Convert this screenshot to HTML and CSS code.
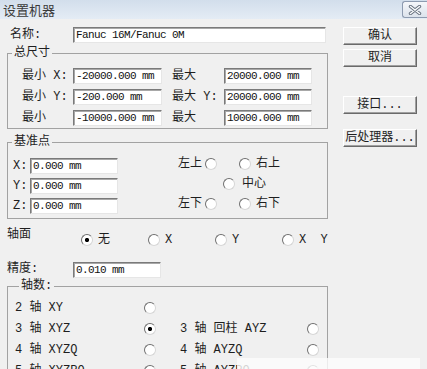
FILE: index.html
```
<!DOCTYPE html>
<html lang="zh-CN">
<head>
  <meta charset="UTF-8">
  <title>设置机器</title>
  <link rel="stylesheet" href="styles.css">
</head>
<body>
  <div class="titlebar">
    <span class="title">设置机器</span>
    <div class="close">
      <svg width="14" height="10" viewBox="0 0 14 10">
        <path d="M2.5 1.5L11.5 8.5M11.5 1.5L2.5 8.5" stroke="#66717f" stroke-width="3.4" stroke-linecap="round"/>
        <path d="M2.5 1.5L11.5 8.5M11.5 1.5L2.5 8.5" stroke="#fbfcfd" stroke-width="1.5" stroke-linecap="round"/>
      </svg>
    </div>
  </div>

  <div class="dialog">
    <div class="main">
      <div class="name-row">
        <label>名称:</label>
        <input class="field name" type="text" value="Fanuc 16M/Fanuc 0M">
      </div>

      <fieldset class="group size">
        <legend>总尺寸</legend>
        <div class="size-grid">
          <label class="lbl">最小 X:</label><input class="field" type="text" value="-20000.000 mm">
          <label class="lbl2">最大</label><input class="field" type="text" value="20000.000 mm">
          <label class="lbl">最小 Y:</label><input class="field" type="text" value="-200.000 mm">
          <label class="lbl2">最大 Y:</label><input class="field" type="text" value="20000.000 mm">
          <label class="lbl">最小</label><input class="field" type="text" value="-10000.000 mm">
          <label class="lbl2">最大</label><input class="field" type="text" value="10000.000 mm">
        </div>
      </fieldset>

      <fieldset class="group base">
        <legend>基准点</legend>
        <div class="base-body">
          <div class="xyz">
            <label>X:</label><input class="field" type="text" value="0.000 mm">
            <label>Y:</label><input class="field" type="text" value="0.000 mm">
            <label>Z:</label><input class="field" type="text" value="0.000 mm">
          </div>
          <div class="corners">
            <div class="corner-row">
              <span class="corner-l">左上</span><input class="radio" type="radio" name="corner">
              <input class="radio right" type="radio" name="corner"><span class="corner-r">右上</span>
            </div>
            <div class="corner-row center">
              <input class="radio" type="radio" name="corner"><span class="corner-c">中心</span>
            </div>
            <div class="corner-row">
              <span class="corner-l">左下</span><input class="radio" type="radio" name="corner">
              <input class="radio right" type="radio" name="corner"><span class="corner-r">右下</span>
            </div>
          </div>
        </div>
      </fieldset>

      <div class="plane">
        <span class="plane-l">轴面</span>
        <div class="plane-opts">
          <label class="opt"><input class="radio" type="radio" name="plane" checked>无</label>
          <label class="opt"><input class="radio" type="radio" name="plane">X</label>
          <label class="opt"><input class="radio" type="radio" name="plane">Y</label>
          <label class="opt"><input class="radio" type="radio" name="plane">X&nbsp; Y</label>
        </div>
      </div>

      <div class="prec-row">
        <label>精度:</label>
        <input class="field" type="text" value="0.010 mm">
      </div>

      <fieldset class="group axes">
        <legend>轴数:</legend>
        <div class="axes-grid">
          <span>2 轴 XY</span><input class="radio" type="radio" name="axes"><span></span><span></span>
          <span>3 轴 XYZ</span><input class="radio" type="radio" name="axes" checked><span class="col3">3 轴 回柱 AYZ</span><input class="radio" type="radio" name="axes">
          <span>4 轴 XYZQ</span><input class="radio" type="radio" name="axes"><span class="col3">4 轴 AYZQ</span><input class="radio" type="radio" name="axes">
          <span>5 轴 XYZRQ</span><input class="radio" type="radio" name="axes"><span class="col3">5 轴 AYZRQ</span><input class="radio" type="radio" name="axes">
        </div>
      </fieldset>
    </div>

    <div class="side">
      <button class="btn">确认</button>
      <button class="btn">取消</button>
      <button class="btn port">接口...</button>
      <button class="btn post">后处理器...</button>
    </div>
  </div>

  <div class="fade"></div>
</body>
</html>
```

FILE: styles.css
```
* {
  box-sizing: border-box;
}
body {
  margin: 0;
  width: 427px;
  height: 369px;
  overflow: hidden;
  position: relative;
  background: #f0f0f0;
  color: #1e1e1e;
  font: 12px/16px "Liberation Mono", "Noto Sans CJK SC", monospace;
}

/* title bar */
.titlebar {
  height: 19px;
  background: linear-gradient(#d2deeb, #e4ecf5);
  display: flex;
  align-items: center;
  justify-content: space-between;
}
.title {
  font: 13px/19px "Noto Sans CJK SC", sans-serif;
  color: #3a3a3a;
  padding-left: 3px;
}
.close {
  width: 25px;
  height: 17px;
  border: 1px solid #8d9bb0;
  border-right: none;
  border-radius: 3px 0 0 3px;
  background: linear-gradient(#f5f7fa, #dce3ec);
  display: flex;
  align-items: center;
  justify-content: center;
}

.dialog {
  display: flex;
  padding-left: 7px;
}
.main {
  width: 321px;
  flex: none;
}

/* inputs */
.field {
  margin: 0;
  height: 16px;
  padding: 0 0 0 2px;
  border-style: solid;
  border-width: 1px;
  border-color: #7a7a7a #e6e6e6 #e6e6e6 #7a7a7a;
  box-shadow: inset 1px 1px #a8a8a8;
  background: #fff;
  color: #111;
  font: 11px/14px "Liberation Mono", monospace;
  letter-spacing: -0.6px;
  outline: none;
}
.radio {
  appearance: none;
  -webkit-appearance: none;
  flex: none;
  width: 12px;
  height: 12px;
  margin: 0;
  border-radius: 50%;
  border: 1px solid;
  border-color: #6f6f6f #d6d6d6 #d6d6d6 #6f6f6f;
  background: #fff;
}
.radio:checked {
  background: radial-gradient(circle, #000 0 1.8px, #fff 2.4px);
}

.name-row {
  display: flex;
  margin-top: 8px;
  height: 16px;
}
.name-row label {
  width: 66px;
  padding-left: 3px;
}
.field.name {
  width: 253px;
}

/* group boxes */
.group {
  margin: 0;
  padding: 0;
  min-width: 0;
  border: 1px solid #a2a2a2;
}
.group legend {
  margin-left: 4px;
  padding: 0 2px;
  line-height: 14px;
}

.size {
  margin-top: 3px;
  padding: 8px 0 2px;
}
.size-grid {
  display: grid;
  grid-template-columns: 65px 89px 62px 88px;
  row-gap: 5px;
  align-items: center;
}
.lbl {
  padding-left: 14px;
}
.lbl2 {
  padding-left: 10px;
}

.base {
  margin-top: 6px;
  padding: 9px 0 4px;
}
.base-body {
  display: flex;
}
.xyz {
  display: grid;
  grid-template-columns: 22px 88px;
  row-gap: 4px;
  align-items: center;
}
.xyz label {
  padding-left: 5px;
}
.corners {
  margin-left: 60px;
  margin-top: -2px;
  display: grid;
  grid-template-rows: repeat(3, 16px);
  row-gap: 4px;
}
.corner-row {
  display: flex;
  align-items: center;
}
.corner-l {
  width: 27px;
}
.radio.right {
  margin-left: 22px;
}
.corner-r {
  margin-left: 5px;
}
.corner-row.center {
  padding-left: 45px;
}
.corner-c {
  margin-left: 7px;
}

/* plane row */
.plane {
  display: flex;
  margin-top: 8px;
  height: 19px;
}
.plane-l {
  width: 74px;
  flex: none;
}
.plane-opts {
  display: flex;
  flex: none;
  padding-top: 7px;
}
.opt {
  width: 67px;
  height: 12px;
  flex: none;
  display: flex;
  align-items: center;
  gap: 5px;
  line-height: 12px;
}

.prec-row {
  display: flex;
  margin-top: 16px;
  height: 16px;
}
.prec-row label {
  width: 66px;
  line-height: 14px;
}
.prec-row .field {
  width: 88px;
}

.axes {
  margin-top: 1px;
  padding: 7px 0 6px 7px;
}
.axes-grid {
  display: grid;
  grid-template-columns: 129px 36px 127px 12px;
  grid-auto-rows: 16px;
  row-gap: 5px;
  align-items: center;
}

/* buttons */
.side {
  width: 74px;
  margin-left: 15px;
  padding-top: 8px;
  display: flex;
  flex-direction: column;
}
.btn {
  height: 18px;
  margin: 0 0 4px;
  padding: 0;
  background: #f0f0f0;
  border: 1px solid;
  border-color: #fff #6a6a6a #6a6a6a #fff;
  box-shadow: inset -1px -1px #a0a0a0;
  color: #1e1e1e;
  font: 12px/16px "Liberation Mono", "Noto Sans CJK SC", monospace;
}
.btn.port {
  margin-top: 25px;
}
.btn.post {
  margin-top: 11px;
}

.fade {
  position: absolute;
  left: 237px;
  top: 358px;
  width: 183px;
  height: 20px;
  background: rgba(251, 251, 251, 0.82);
}
```
